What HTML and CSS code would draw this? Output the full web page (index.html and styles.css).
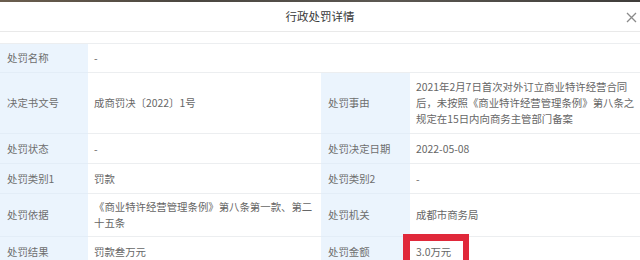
FILE: index.html
```html
<!DOCTYPE html>
<html lang="zh">
<head>
<meta charset="utf-8">
<title>行政处罚详情</title>
<link rel="stylesheet" href="styles.css">
</head>
<body>
<div class="strip"></div>
<div class="dialog">
  <header class="header">
    <h1 class="title">行政处罚详情</h1>
    <button class="close" aria-label="关闭">
      <svg width="11" height="11" viewBox="0 0 11 11"><path d="M1 1L10 10M10 1L1 10" stroke="#8a8a8a" stroke-width="1.3" fill="none"/></svg>
    </button>
  </header>
  <div class="table">
    <div class="cell label">处罚名称</div>
    <div class="cell value span3">-</div>

    <div class="cell label">决定书文号</div>
    <div class="cell value">成商罚决〔2022〕1号</div>
    <div class="cell label">处罚事由</div>
    <div class="cell value">2021年2月7日首次对外订立商业特许经营合同<br>后，未按照《商业特许经营管理条例》第八条之<br>规定在15日内向商务主管部门备案</div>

    <div class="cell label">处罚状态</div>
    <div class="cell value">-</div>
    <div class="cell label">处罚决定日期</div>
    <div class="cell value">2022-05-08</div>

    <div class="cell label">处罚类别1</div>
    <div class="cell value">罚款</div>
    <div class="cell label">处罚类别2</div>
    <div class="cell value">-</div>

    <div class="cell label">处罚依据</div>
    <div class="cell value">《商业特许经营管理条例》第八条第一款、第二<br>十五条</div>
    <div class="cell label">处罚机关</div>
    <div class="cell value">成都市商务局</div>

    <div class="cell label last">处罚结果</div>
    <div class="cell value last">罚款叁万元</div>
    <div class="cell label last">处罚金额</div>
    <div class="cell value last amount"><span class="mark"></span>3.0万元</div>
  </div>
</div>
</body>
</html>
```
FILE: styles.css
```css
* { box-sizing: border-box; }
html, body {
  margin: 0;
  padding: 0;
  background: #fff;
}
body {
  width: 640px;
  height: 260px;
  overflow: hidden;
  font-family: "Noto Sans CJK SC", "Noto Sans", sans-serif;
  color: #666;
}
.strip {
  height: 2px;
  background: linear-gradient(90deg, #6b5e4e 0%, #4a4640 30%, #5c5852 60%, #3f3d3a 100%);
}
.header {
  position: relative;
  height: 30px;
  border-bottom: 1px solid #e9e9e9;
  display: flex;
  align-items: center;
  justify-content: center;
}
.title {
  margin: 0;
  font-size: 11.5px;
  font-weight: normal;
  color: #3a3a3a;
  line-height: 1;
}
.close {
  position: absolute;
  right: 3px;
  top: 10px;
  border: 0;
  padding: 0;
  background: none;
  width: 11px;
  height: 11px;
  display: flex;
}
.table {
  margin-top: 11px;
  border-top: 1px solid #eceef0;
  display: grid;
  grid-template-columns: 88px 233px 89px 230px;
  grid-template-rows: 29px 61px 30px 30px 43px 24px;
  font-size: 10.4px;
  line-height: 16px;
}
.cell {
  display: flex;
  align-items: center;
  border-bottom: 1px solid #eceef0;
}
.cell.last {
  align-items: flex-start;
  padding-top: 7px;
  border-bottom: 0;
}
.label {
  background: #ebf4fd;
  padding: 0 4px 0 7px;
  color: #6e6e6e;
  border-bottom-color: #e3edf7;
}
.value {
  padding: 0 4px 0 6px;
  color: #666;
}
.span3 { grid-column: span 3; }
.amount {
  position: relative;
}
.mark {
  position: absolute;
  left: -7px;
  top: -3px;
  width: 66px;
  height: 27px;
  border: 7px solid #e0283a;
  border-right-width: 6px;
  border-bottom-width: 0;
}
```
